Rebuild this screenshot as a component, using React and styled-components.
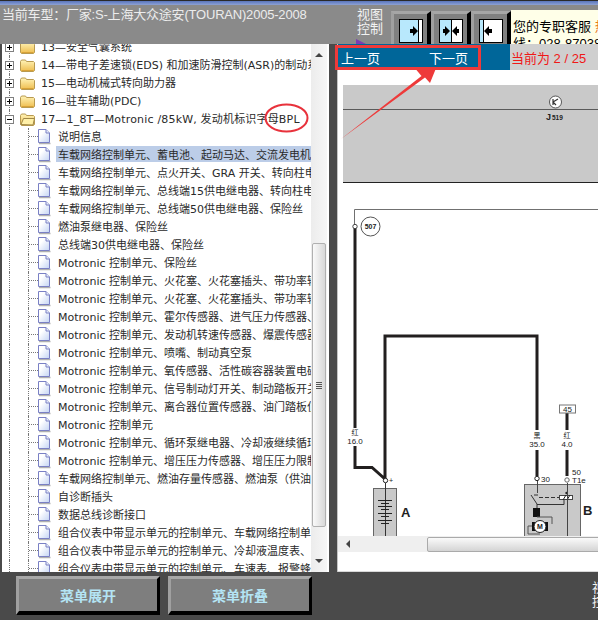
import React from 'react';
import styled, { createGlobalStyle } from 'styled-components';

const GlobalStyle = createGlobalStyle`
  html, body {
    margin: 0;
    padding: 0;
    background: #4a4a4a;
  }
`;

const uiFont = `"Liberation Sans", "Noto Sans CJK SC", sans-serif`;
const treeFont = `"DejaVu Sans", "Noto Sans CJK SC", sans-serif`;

const Page = styled.div`
  position: relative;
  width: 598px;
  height: 620px;
  display: flex;
  flex-direction: column;
  overflow: hidden;
  background: #4a4a4a;
  font-family: ${uiFont};
`;

const TitleStrip = styled.div`
  height: 5px;
  flex: none;
  background: linear-gradient(#2a2a2a 1px, #5874bc 1px, #8ea2d4 5px);
`;

const Header = styled.div`
  height: 39px;
  flex: none;
  display: flex;
  overflow: hidden;
  background: #8a8a8a;
`;

const CarTitle = styled.div`
  width: 354px;
  flex: none;
  padding: 1px 0 0 2px;
  font-size: 13px;
  line-height: 18px;
  letter-spacing: -0.2px;
  color: #ececec;
  white-space: nowrap;
`;

const ViewCaption = styled.div`
  width: 34px;
  flex: none;
  padding: 3px 0 0 1px;
  font-size: 13px;
  line-height: 14px;
  color: #f2f2f2;
`;

const CaptionMark = styled.div`
  width: 12px;
  height: 6px;
  margin: 3px 0 0 -1px;
  background: #7a3cb4;
  clip-path: polygon(0 0, 100% 100%, 0 100%);
`;

const ViewButtons = styled.div`
  display: flex;
  flex: none;
  margin-top: 6px;
`;

const ViewButton = styled.div`
  width: 40px;
  height: 42px;
  padding: 5px 0 0 5px;
  box-sizing: border-box;
  background: #808080;
  border-top: 3px solid #a6a6a6;
  border-left: 3px solid #a0a0a0;
  border-right: 4px solid #000;
`;

const ServicePanel = styled.div`
  flex: 1;
  min-width: 0;
  margin-top: 5px;
  padding: 8px 0 0 2px;
  overflow: hidden;
  background: #ffffe8;
  font-size: 13px;
  line-height: 17px;
  color: #000;
  white-space: nowrap;
`;

const Accent = styled.span`
  color: #e8761c;
`;

const Main = styled.div`
  flex: 1;
  display: flex;
  min-height: 0;
`;

const TreePane = styled.div`
  width: 327px;
  margin-left: 2px;
  display: flex;
  background: #fff;
`;

const TreeList = styled.div`
  width: 309px;
  overflow: hidden;
  font-family: ${treeFont};
  font-size: 11px;
  color: #2a2a2a;
`;

const TreeInner = styled.div`
  margin-top: -6px;
`;

const Row = styled.div`
  height: 18px;
  display: flex;
  align-items: center;
  white-space: nowrap;
`;

const ExpanderCell = styled.div`
  position: relative;
  width: 9px;
  height: 18px;
  flex: none;
  margin: 0 6px 0 3px;
  display: flex;
  align-items: center;

  &::before {
    content: '';
    position: absolute;
    left: 4px;
    top: 0;
    bottom: 0;
    border-left: 1px dotted #777;
  }
`;

const Expander = styled.div`
  position: relative;
  width: 7px;
  height: 7px;
  border: 1px solid #808080;
  background: #fff;

  &::before {
    content: '';
    position: absolute;
    left: 1px;
    right: 1px;
    top: 3px;
    height: 1px;
    background: #000;
  }

  &::after {
    content: '';
    display: ${props => props.$open ? 'none' : 'block'};
    position: absolute;
    top: 1px;
    bottom: 1px;
    left: 3px;
    width: 1px;
    background: #000;
  }
`;

const Guide = styled.div`
  width: 18px;
  height: 18px;
  flex: none;
  margin-left: 7px;
  border-left: 1px dotted #777;
`;

const Branch = styled.div`
  position: relative;
  width: 9px;
  height: 18px;
  flex: none;
  border-left: 1px dotted #777;

  &::after {
    content: '';
    position: absolute;
    left: 0;
    right: 0;
    top: 8px;
    border-top: 1px dotted #777;
  }
`;

const Label = styled.div`
  flex: 1;
  min-width: 0;
  align-self: flex-start;
  height: 16px;
  line-height: 19px;
  margin-left: ${props => props.$inset}px;
  padding-left: 2px;
  overflow: hidden;
  letter-spacing: ${props => props.$tracking || 0}px;
  background: ${props => props.$selected ? '#bccde8' : 'transparent'};
`;

const VScroll = styled.div`
  width: 16px;
  flex: none;
  display: flex;
  flex-direction: column;
  align-items: center;
  background: linear-gradient(90deg, #ececec, #f6f6f6);
`;

const ArrowCell = styled.div`
  height: 22px;
  flex: none;
  margin-top: ${props => props.$bottom ? 'auto' : 0};
  display: flex;
  align-items: center;
  justify-content: center;
`;

const ArrowUp = styled.div`
  border: 4px solid transparent;
  border-top: 0;
  border-bottom: 4px solid #444;
`;

const ArrowDown = styled.div`
  border: 4px solid transparent;
  border-bottom: 0;
  border-top: 4px solid #444;
`;

const VThumb = styled.div`
  width: 14px;
  height: 284px;
  margin-top: 177px;
  box-sizing: border-box;
  display: flex;
  flex-direction: column;
  align-items: center;
  justify-content: center;
  gap: 1px;
  border: 1px solid #b0b0b0;
  border-radius: 2px;
  background: linear-gradient(90deg, #fafafa, #d8d8d8);
`;

const Grip = styled.div`
  width: 6px;
  height: 1px;
  background: #555;
`;

const Divider = styled.div`
  width: 8px;
  flex: none;
  background: #4a4a4a;
`;

const DiagramPane = styled.div`
  flex: 1;
  min-width: 0;
  display: flex;
  flex-direction: column;
  background: #fff;
  border-left: 1px solid #c4c4c4;
`;

const NavBar = styled.div`
  height: 26px;
  flex: none;
  display: flex;
`;

const NavLinks = styled.div`
  width: 172px;
  flex: none;
  display: flex;
  align-items: center;
  gap: 49px;
  padding-left: 3px;
  box-sizing: border-box;
  background: #006699;
`;

const NavLink = styled.div`
  font-size: 13px;
  color: #fff;
`;

const PageStatus = styled.div`
  flex: 1;
  padding-left: 1px;
  display: flex;
  align-items: center;
  background: #cfcfcf;
  font-size: 13px;
  color: #f01818;
  white-space: pre;
`;

const Sheet = styled.div`
  flex: 1;
  min-height: 0;
  overflow: hidden;
  padding: 15px 0 0 5px;
`;

const HScroll = styled.div`
  height: 16px;
  flex: none;
  display: flex;
  align-items: center;
  background: #efefef;
`;

const ArrowLeft = styled.div`
  margin-left: 8px;
  border: 4px solid transparent;
  border-left: 0;
  border-right: 4px solid #444;
`;

const HThumb = styled.div`
  width: 200px;
  height: 15px;
  flex: none;
  margin-left: 77px;
  box-sizing: border-box;
  border: 1px solid #aaa;
  border-radius: 2px;
  background: linear-gradient(#fafafa, #d4d4d4);
`;

const PaneFooter = styled.div`
  height: 19px;
  flex: none;
  border-bottom: 1px solid #d8d8d8;
`;

const BottomBar = styled.div`
  height: 48px;
  flex: none;
  display: flex;
  gap: 8px;
  padding: 4px 0 0 16px;
  box-sizing: border-box;
  background: #4a4a4a;
`;

const MenuButton = styled.div`
  width: 144px;
  height: 39px;
  box-sizing: border-box;
  display: flex;
  align-items: center;
  justify-content: center;
  background: #7e7e7e;
  border-top: 3px solid #a8a8a8;
  border-left: 3px solid #a0a0a0;
  border-right: 3px solid #000;
  border-bottom: 4px solid #000;
  font-size: 14px;
  font-weight: 700;
  color: #b4e4f4;
`;

const BottomCaption = styled.div`
  margin-left: auto;
  width: 6px;
  padding-top: 5px;
  overflow: hidden;
  font-size: 13px;
  line-height: 14px;
  color: #f4f4f4;
  white-space: nowrap;
`;

const Annotations = styled.svg`
  position: absolute;
  left: 0;
  top: 0;
  pointer-events: none;
`;

const chapters = [
  { text: '13—安全气囊系统' },
  { text: '14—带电子差速锁(EDS) 和加速防滑控制(ASR)的制动系统' },
  { text: '15—电动机械式转向助力器' },
  { text: '16—驻车辅助(PDC)' },
  { text: '17—1_8T—Motronic /85kW, 发动机标识字母BPL', open: true },
];

const pages = [
  '说明信息',
  '车载网络控制单元、蓄电池、起动马达、交流发电机、保险丝',
  '车载网络控制单元、点火开关、GRA 开关、转向柱电子装置',
  '车载网络控制单元、总线端15供电继电器、转向柱电子装置',
  '车载网络控制单元、总线端50供电继电器、保险丝',
  '燃油泵继电器、保险丝',
  '总线端30供电继电器、保险丝',
  'Motronic 控制单元、保险丝',
  'Motronic 控制单元、火花塞、火花塞插头、带功率输出级',
  'Motronic 控制单元、火花塞、火花塞插头、带功率输出级',
  'Motronic 控制单元、霍尔传感器、进气压力传感器、进气',
  'Motronic 控制单元、发动机转速传感器、爆震传感器',
  'Motronic 控制单元、喷嘴、制动真空泵',
  'Motronic 控制单元、氧传感器、活性碳容器装置电磁阀',
  'Motronic 控制单元、信号制动灯开关、制动踏板开关',
  'Motronic 控制单元、离合器位置传感器、油门踏板位置',
  'Motronic 控制单元',
  'Motronic 控制单元、循环泵继电器、冷却液继续循环泵',
  'Motronic 控制单元、增压压力传感器、增压压力限制阀',
  '车载网络控制单元、燃油存量传感器、燃油泵（供油单元）',
  '自诊断插头',
  '数据总线诊断接口',
  '组合仪表中带显示单元的控制单元、车载网络控制单元',
  '组合仪表中带显示单元的控制单元、冷却液温度表、',
  '组合仪表中带显示单元的控制单元、车速表、报警蜂鸣器',
];

const FolderIcon = ({open}) => (
  <svg width="15" height="15" viewBox="0 0 15 15" style={{flex: 'none'}}>
    <defs>
      <linearGradient id="folderFill" x1="0" y1="0" x2="0" y2="1">
        <stop offset="0" stopColor="#fff4b8" />
        <stop offset="1" stopColor="#eebc4c" />
      </linearGradient>
    </defs>
    <path d="M0.5 3.5 L1.5 2 H5.5 L6.5 3.5 H13.5 L14.5 4.5 V12.5 L13.5 13.5 H1.5 L0.5 12.5 Z" fill="url(#folderFill)" stroke="#b89a50" />
    {open
      ? <path d="M1 12.5 L3.5 6.5 H14.5 L13 13 Z" fill="#fff0a8" stroke="#a08848" />
      : <path d="M1.5 12.5 H13.5" stroke="#d8a238" />}
  </svg>
);

const PageIcon = () => (
  <svg width="13" height="16" viewBox="0 0 13 16" style={{flex: 'none'}}>
    <defs>
      <linearGradient id="pageFill" x1="0" y1="0" x2="1" y2="1">
        <stop offset="0.3" stopColor="#ffffff" />
        <stop offset="1" stopColor="#c4d4f4" />
      </linearGradient>
    </defs>
    <path d="M1 14.5 H12.5" stroke="#b0b0b0" strokeWidth="1.5" />
    <path d="M0.5 0.5 H8 L11.5 4 V13.5 H0.5 Z" fill="url(#pageFill)" stroke="#7a80c4" />
    <path d="M8 0.5 V4 H11.5" fill="#e6ecfa" stroke="#7a80c4" />
  </svg>
);

const ChapterRow = ({text, open}) => (
  <Row>
    <ExpanderCell><Expander $open={open} /></ExpanderCell>
    <FolderIcon open={open} />
    <Label $inset={4} $tracking={open ? 0.18 : 0}>{text}</Label>
  </Row>
);

const PageRow = ({text, selected}) => (
  <Row>
    <Guide />
    <Branch />
    <PageIcon />
    <Label $inset={5} $selected={selected}>{text}</Label>
  </Row>
);

const PaneIcon = ({split, fill, children}) => (
  <svg width="24" height="24" viewBox="0 0 24 24" style={{display: 'block'}}>
    <rect x="0.5" y="0.5" width="23" height="23" fill="#fff" stroke="#000" />
    <rect x="1" y="1" width={fill} height="22" fill="#b8e8fc" />
    <path d={`M${split}.5 0.5 V23.5`} stroke="#000" />
    <path d={children} fill="#000" />
  </svg>
);

const DiagramText = styled.text`
  font-family: "Liberation Sans", "Noto Sans CJK SC", sans-serif;
  font-size: ${props => props.$size || 8}px;
  font-weight: ${props => props.$bold ? 700 : 400};
  fill: #222;
`;

const Diagram = () => (
  <svg width="255" height="451" viewBox="343 85 255 451" style={{display: 'block'}}>
    <rect x="343" y="85" width="255" height="97" fill="#c9c9c9" />
    <path d="M343 109.5 H598" stroke="#5a5a5a" />
    <path d="M343 182.5 H598" stroke="#222" />
    <circle cx="555.5" cy="102" r="6" fill="#fff" stroke="#555" />
    <path d="M553 99 V105 M553 102 L558 99 M553 102 L556 105" stroke="#333" strokeWidth="1.2" fill="none" />
    <DiagramText x="546" y="120" $bold $size={9}>J</DiagramText>
    <DiagramText x="552" y="120" $bold $size={6.5}>519</DiagramText>

    <path d="M354.5 226 V209.5 H598" stroke="#707070" fill="none" />
    <circle cx="370.5" cy="226.5" r="9.5" fill="#fff" stroke="#555" />
    <DiagramText x="370.5" y="229" textAnchor="middle" $bold $size={7}>507</DiagramText>

    <path d="M355 228 V428 M355 446 V467.5 H372 L385 479 V336 H537 V430 M537 450 V476" stroke="#221f1f" strokeWidth="3" fill="none" />
    <path d="M567 413 V430 M567 450 V476" stroke="#221f1f" strokeWidth="3" fill="none" />

    <circle cx="355" cy="226.5" r="2.2" fill="#fff" stroke="#444" />
    <DiagramText x="355" y="435" textAnchor="middle" $size={7}>红</DiagramText>
    <DiagramText x="355" y="444" textAnchor="middle">16.0</DiagramText>
    <DiagramText x="537" y="438" textAnchor="middle" $size={7}>黑</DiagramText>
    <DiagramText x="537" y="447" textAnchor="middle">35.0</DiagramText>
    <DiagramText x="567" y="438" textAnchor="middle" $size={7}>红</DiagramText>
    <DiagramText x="567" y="447" textAnchor="middle">4.0</DiagramText>

    <rect x="559.5" y="405" width="16" height="8" fill="#fff" stroke="#777" />
    <DiagramText x="567.5" y="412" textAnchor="middle">45</DiagramText>

    <rect x="373.5" y="488.5" width="23" height="50" fill="#c9c9c9" stroke="#666" />
    <path d="M385.5 483 V538" stroke="#333" />
    <path d="M378 500.5 H392 M381 503.5 H389 M378 506.5 H392 M381 509.5 H389 M378 513.5 H392 M381 516.5 H389 M378 520.5 H392 M381 523.5 H389" stroke="#222" />
    <circle cx="385.5" cy="480.5" r="2.2" fill="#fff" stroke="#222" />
    <DiagramText x="389" y="483" $size={7}>+</DiagramText>
    <DiagramText x="401" y="517" $bold $size={13}>A</DiagramText>

    <rect x="524.5" y="484.5" width="56" height="54" fill="#c9c9c9" stroke="#666" />
    <path d="M537.5 481 V493" stroke="#444" />
    <circle cx="537" cy="478.5" r="2.2" fill="#fff" stroke="#222" />
    <DiagramText x="541" y="482">30</DiagramText>
    <circle cx="567" cy="480" r="2.2" fill="#fff" stroke="#666" />
    <DiagramText x="572" y="475">50</DiagramText>
    <DiagramText x="572" y="483">T1e</DiagramText>
    <path d="M534 495 H538 M531 495 L537 504 V510 M537 504.5 H564 V499" stroke="#333" fill="none" />
    <path d="M539 497.5 H559" stroke="#333" strokeDasharray="4 2" />
    <rect x="559.5" y="495.5" width="13" height="4" fill="#fff" stroke="#444" />
    <path d="M563 500 L566 495 M567 500 L570 495" stroke="#222" />
    <circle cx="566.5" cy="493" r="1.2" fill="#222" />
    <path d="M567.5 483 V538" stroke="#444" />
    <rect x="533" y="508" width="7" height="9" fill="#111" />
    <path d="M537 517 H552 V524 M532 526 H528 V534 H540" stroke="#555" fill="none" />
    <rect x="532" y="522" width="16" height="9" fill="#111" />
    <circle cx="540" cy="526.5" r="6" fill="#fff" stroke="#222" />
    <DiagramText x="540" y="529" textAnchor="middle" $bold $size={7}>M</DiagramText>
    <DiagramText x="583" y="515" $bold $size={13}>B</DiagramText>
  </svg>
);

const App = () => {
  return (
    <Page>
      <GlobalStyle />
      <TitleStrip />
      <Header>
        <CarTitle>当前车型：厂家:S-上海大众途安(TOURAN)2005-2008</CarTitle>
        <ViewCaption>
          视图<br />控制
          <CaptionMark />
        </ViewCaption>
        <ViewButtons>
          <ViewButton>
            <PaneIcon split={19} fill={18}>M11 10 H14 V7 L19 12 L14 17 V14 H11 Z</PaneIcon>
          </ViewButton>
          <ViewButton>
            <PaneIcon split={12} fill={11}>M4 10 H6 V7 L11 12 L6 17 V14 H4 Z M20 10 H18 V7 L13 12 L18 17 V14 H20 Z</PaneIcon>
          </ViewButton>
          <ViewButton>
            <PaneIcon split={4} fill={3}>M13 10 H10 V7 L5 12 L10 17 V14 H13 Z</PaneIcon>
          </ViewButton>
        </ViewButtons>
        <ServicePanel>
          您的专职客服 <Accent>热</Accent><br />
          线：028-87038888
        </ServicePanel>
      </Header>
      <Main>
        <TreePane>
          <TreeList>
            <TreeInner>
              {chapters.map(chapter => (
                <ChapterRow key={chapter.text} text={chapter.text} open={chapter.open} />
              ))}
              {pages.map((text, index) => (
                <PageRow key={index} text={text} selected={index === 1} />
              ))}
            </TreeInner>
          </TreeList>
          <VScroll>
            <ArrowCell><ArrowUp /></ArrowCell>
            <VThumb><Grip /><Grip /><Grip /><Grip /></VThumb>
            <ArrowCell $bottom><ArrowDown /></ArrowCell>
          </VScroll>
        </TreePane>
        <Divider />
        <DiagramPane>
          <NavBar>
            <NavLinks>
              <NavLink>上一页</NavLink>
              <NavLink>下一页</NavLink>
            </NavLinks>
            <PageStatus>当前为 2 / 25</PageStatus>
          </NavBar>
          <Sheet><Diagram /></Sheet>
          <HScroll>
            <ArrowLeft />
            <HThumb />
          </HScroll>
          <PaneFooter />
        </DiagramPane>
      </Main>
      <BottomBar>
        <MenuButton>菜单展开</MenuButton>
        <MenuButton>菜单折叠</MenuButton>
        <BottomCaption>视图<br />控制</BottomCaption>
      </BottomBar>
      <Annotations width="598" height="620" viewBox="0 0 598 620">
        <ellipse cx="286.5" cy="118" rx="21" ry="13.5" fill="none" stroke="#e8323c" strokeWidth="2" />
        <rect x="336.5" y="46.5" width="143" height="22" fill="none" stroke="#ee3a3a" strokeWidth="3" />
        <path d="M341 139 L421.5 76 L416 69.5 H435.5 L430 83 L425 77.5 Z" fill="#ee3a3a" />
      </Annotations>
    </Page>
  );
};

export default App;
